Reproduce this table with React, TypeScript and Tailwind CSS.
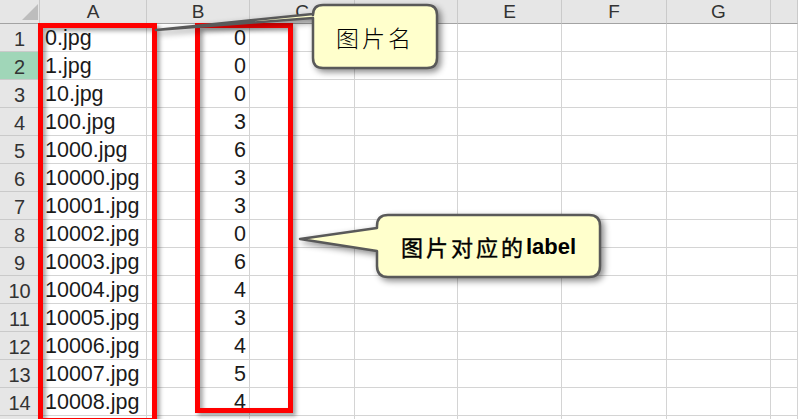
const COLS = ["A", "B", "C", "D", "E", "F", "G", ""];

const ROWS: [string, string][] = [
  ["0.jpg", "0"],
  ["1.jpg", "0"],
  ["10.jpg", "0"],
  ["100.jpg", "3"],
  ["1000.jpg", "6"],
  ["10000.jpg", "3"],
  ["10001.jpg", "3"],
  ["10002.jpg", "0"],
  ["10003.jpg", "6"],
  ["10004.jpg", "4"],
  ["10005.jpg", "3"],
  ["10006.jpg", "4"],
  ["10007.jpg", "5"],
  ["10008.jpg", "4"],
  ["", ""],
];

function HeaderRow() {
  return (
    <>
      {/* corner */}
      <div className="relative h-[24px] bg-[#e6e6e6] border-r border-b border-r-[#c8c8c8] border-b-[#a3a3a3]">
        <svg width="40" height="24" className="absolute left-0 top-0">
          <polygon points="22,20 38,20 38,4" fill="#bdbdbd" />
        </svg>
      </div>
      {COLS.map((c, i) => (
        <div
          key={i}
          className="h-[24px] bg-[#e6e6e6] border-r border-b border-r-[#cacaca] border-b-[#a3a3a3] flex items-center justify-center text-[19px] text-[#333] leading-none"
        >
          {c}
        </div>
      ))}
    </>
  );
}

function DataRow({ n, name, label }: { n: number; name: string; label: string }) {
  const selected = n === 2;
  return (
    <>
      <div
        className={`h-[28px] border-r border-b border-r-[#a3a3a3] border-b-[#cacaca] flex items-end justify-center pb-[2px] text-[20px] leading-none text-[#333] ${
          selected ? "bg-[#a0d6b8]" : "bg-[#e6e6e6]"
        }`}
      >
        {name ? n : ""}
      </div>
      <div className="h-[28px] border-r border-b border-[#d4d4d4] flex items-end pl-[5px] pb-[2px] text-[21.5px] leading-none text-[#1a1a1a] whitespace-nowrap">
        {name}
      </div>
      <div className="h-[28px] border-r border-b border-[#d4d4d4] flex items-end justify-end pr-[3px] pb-[2px] text-[21.5px] leading-none text-[#1a1a1a]">
        {label}
      </div>
      {[0, 1, 2, 3, 4, 5].map((k) => (
        <div key={k} className="h-[28px] border-r border-b border-[#d4d4d4]" />
      ))}
    </>
  );
}

export default function App() {
  return (
    <div className="relative w-[798px] h-[419px] overflow-hidden bg-white font-['Liberation_Sans','Noto_Sans_CJK_SC',sans-serif]">
      {/* Sheet grid */}
      <div className="grid grid-cols-[40px_107px_103px_105px_103px_104px_105px_104px_1fr]">
        <HeaderRow />
        {ROWS.map(([name, label], i) => (
          <DataRow key={i} n={i + 1} name={name} label={label} />
        ))}
      </div>

      {/* Red highlight boxes */}
      <div className="absolute left-[38px] top-[23px] w-[119px] h-[400px] border-[5px] border-[#ff0000] shadow-[3px_3px_4px_rgba(0,0,0,0.35),inset_3px_3px_4px_rgba(0,0,0,0.35)]" />
      <div className="absolute left-[195px] top-[23px] w-[98px] h-[390px] border-[5px] border-[#ff0000] shadow-[3px_3px_4px_rgba(0,0,0,0.35),inset_3px_3px_4px_rgba(0,0,0,0.35)]" />

      {/* Callouts */}
      <svg
        width="798"
        height="419"
        className="absolute left-0 top-0 drop-shadow-[3px_3px_3px_rgba(0,0,0,0.45)]"
      >
        <path
          d="M 323 5 H 427 Q 437 5 437 15 V 58 Q 437 68 427 68 H 323 Q 313 68 313 58 V 18 L 156 30 L 313 14 V 15 Q 313 5 323 5 Z"
          fill="#ffffcc"
          stroke="#595959"
          strokeWidth="2.5"
          strokeLinejoin="round"
        />
        <path
          d="M 388 215 H 589 Q 600 215 600 226 V 266 Q 600 277 589 277 H 388 Q 377 277 377 266 V 251 L 300 239 L 377 228 V 226 Q 377 215 388 215 Z"
          fill="#ffffcc"
          stroke="#595959"
          strokeWidth="2.5"
          strokeLinejoin="round"
        />
      </svg>
      <div className="absolute left-[315px] top-[7px] w-[120px] h-[60px] flex items-center justify-center text-[23px] font-light tracking-[3px] text-black font-['Noto_Sans_CJK_SC',sans-serif]">
        图片名
      </div>
      <div className="absolute left-[379px] top-[217px] w-[219px] h-[58px] flex items-center justify-center text-[22px] font-bold text-black">
        <span className="tracking-[3px] font-['Noto_Sans_CJK_SC',sans-serif] font-normal [-webkit-text-stroke:0.4px_black]">
          图片对应的
        </span>
        <span className="font-['Liberation_Sans',sans-serif]">label</span>
      </div>
    </div>
  );
}
